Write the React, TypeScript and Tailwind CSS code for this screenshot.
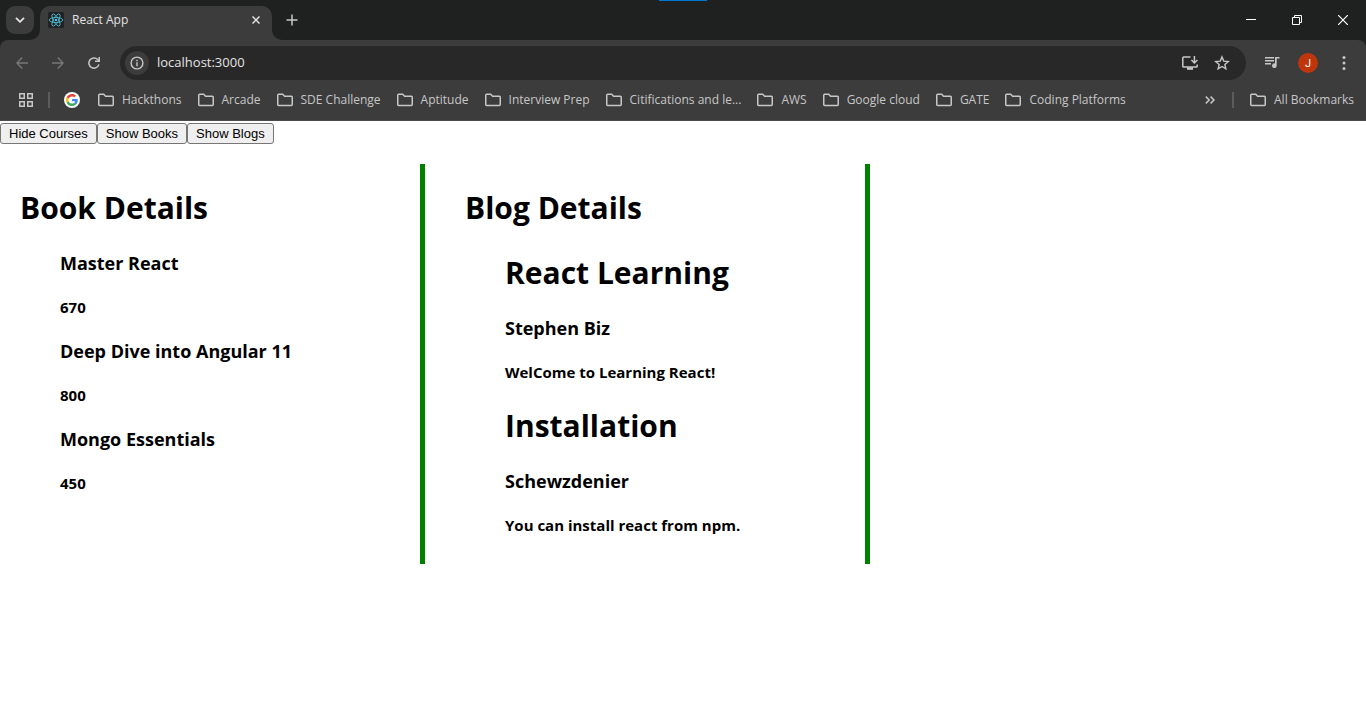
import React from "react";

const bookmarks = [
  "Hackthons",
  "Arcade",
  "SDE Challenge",
  "Aptitude",
  "Interview Prep",
  "Citifications and le...",
  "AWS",
  "Google cloud",
  "GATE",
  "Coding Platforms",
];

const books = [
  { id: 1, name: "Master React", price: 670 },
  { id: 2, name: "Deep Dive into Angular 11", price: 800 },
  { id: 3, name: "Mongo Essentials", price: 450 },
];

const blogs = [
  { id: 1, title: "React Learning", author: "Stephen Biz", text: "WelCome to Learning React!" },
  { id: 2, title: "Installation", author: "Schewzdenier", text: "You can install react from npm." },
];

function FolderIcon() {
  return (
    <svg width="16" height="14" viewBox="0 0 16 14" fill="none" stroke="#c7c7c7" strokeWidth="1.5" className="shrink-0" aria-hidden="true">
      <path d="M.75 11.5V2.2c0-.5.4-.9.9-.9h4.1l1.8 1.9h6.8c.5 0 .9.4.9.9v7.4c0 .5-.4.9-.9.9H1.65c-.5 0-.9-.4-.9-.9z" />
    </svg>
  );
}

function ReactLogo() {
  return (
    <svg width="16" height="16" viewBox="0 0 16 16" className="shrink-0" aria-hidden="true">
      <rect width="16" height="16" rx="1.5" fill="#222222" />
      <g fill="none" stroke="#53c1de" strokeWidth=".8">
        <ellipse cx="8" cy="8" rx="6.8" ry="2.6" />
        <ellipse cx="8" cy="8" rx="6.8" ry="2.6" transform="rotate(60 8 8)" />
        <ellipse cx="8" cy="8" rx="6.8" ry="2.6" transform="rotate(120 8 8)" />
      </g>
      <circle cx="8" cy="8" r="1.3" fill="#53c1de" />
    </svg>
  );
}

function GoogleLogo() {
  return (
    <svg width="16" height="16" viewBox="0 0 16 16" aria-hidden="true">
      <circle cx="8" cy="8" r="8" fill="#fff" />
      <g transform="translate(2 2) scale(.25)">
        <path fill="#EA4335" d="M24 9.5c3.54 0 6.71 1.22 9.21 3.6l6.85-6.85C35.9 2.38 30.47 0 24 0 14.62 0 6.51 5.38 2.56 13.22l7.98 6.19C12.43 13.72 17.74 9.5 24 9.5z" />
        <path fill="#4285F4" d="M46.98 24.55c0-1.57-.15-3.09-.38-4.55H24v9.02h12.94c-.58 2.96-2.26 5.48-4.78 7.18l7.73 6c4.51-4.18 7.09-10.36 7.09-17.65z" />
        <path fill="#FBBC05" d="M10.53 28.59c-.48-1.45-.76-2.99-.76-4.59s.27-3.14.76-4.59l-7.98-6.19C.92 16.46 0 20.12 0 24c0 3.88.92 7.54 2.56 10.78l7.97-6.19z" />
        <path fill="#34A853" d="M24 48c6.48 0 11.93-2.13 15.89-5.81l-7.73-6c-2.15 1.45-4.92 2.3-8.16 2.3-6.26 0-11.57-4.22-13.47-9.91l-7.98 6.19C6.51 42.62 14.62 48 24 48z" />
      </g>
    </svg>
  );
}

function TabStrip() {
  return (
    <div className="relative flex h-10 items-end bg-[#1f2020]">
      <div className="absolute left-[659px] top-0 h-px w-12 bg-[#0078d7]" />
      <button aria-label="Search tabs" className="mb-1.5 ml-1.5 flex size-7 items-center justify-center rounded-[9px] bg-[#3c3c3c]">
        <svg width="10" height="6" viewBox="0 0 10 6" fill="none" stroke="#e3e3e3" strokeWidth="1.8" aria-hidden="true">
          <path d="M1 .8l4 4 4-4" />
        </svg>
      </button>
      <div className="relative ml-1.5 flex h-[34px] w-[232px] items-center rounded-t-[10px] bg-[#3c3c3c] pb-1.5 pl-2 pr-2.5">
        <svg width="10" height="10" viewBox="0 0 10 10" className="absolute -left-2.5 bottom-0" aria-hidden="true">
          <path d="M10 0v10H0A10 10 0 0 0 10 0z" fill="#3c3c3c" />
        </svg>
        <svg width="10" height="10" viewBox="0 0 10 10" className="absolute -right-2.5 bottom-0" aria-hidden="true">
          <path d="M0 0v10h10A10 10 0 0 1 0 0z" fill="#3c3c3c" />
        </svg>
        <ReactLogo />
        <span className="ml-2 flex-1 text-xs text-[#e3e3e3]">React App</span>
        <button aria-label="Close tab" className="flex size-3 items-center justify-center">
          <svg width="8" height="8" viewBox="0 0 8 8" stroke="#e3e3e3" strokeWidth="1.5" aria-hidden="true">
            <path d="M.5.5l7 7M7.5.5l-7 7" />
          </svg>
        </button>
      </div>
      <button aria-label="New tab" className="mb-1.5 ml-1.5 flex size-7 items-center justify-center">
        <svg width="12" height="12" viewBox="0 0 12 12" stroke="#c7c7c7" strokeWidth="1.5" aria-hidden="true">
          <path d="M6 .5v11M.5 6h11" />
        </svg>
      </button>
      <div className="ml-auto flex h-10 items-center">
        <button aria-label="Minimize" className="flex h-10 w-[46px] items-center justify-center">
          <svg width="10" height="10" viewBox="0 0 10 10" aria-hidden="true"><path d="M0 4h10v1H0z" fill="#fff" /></svg>
        </button>
        <button aria-label="Restore" className="flex h-10 w-[46px] items-center justify-center">
          <svg width="10" height="10" viewBox="0 0 10 10" fill="none" stroke="#fff" aria-hidden="true">
            <path d="M.5 2.5h7v7h-7zM2.5 2.5v-2h7v7h-2" />
          </svg>
        </button>
        <button aria-label="Close" className="flex h-10 w-[46px] items-center justify-center">
          <svg width="10" height="10" viewBox="0 0 10 10" stroke="#fff" strokeWidth="1.2" aria-hidden="true">
            <path d="M0 0l10 10M10 0L0 10" />
          </svg>
        </button>
      </div>
    </div>
  );
}

function Toolbar() {
  return (
    <div className="flex h-10 items-end">
      <div className="flex h-[34px] items-center gap-5 pl-3.5">
        <button aria-label="Back" className="flex size-4 items-center justify-center">
          <svg width="12" height="12" viewBox="0 0 12 12" fill="none" stroke="#777777" strokeWidth="1.4" aria-hidden="true">
            <path d="M12 6H1M6.2.6L.9 6l5.3 5.4" />
          </svg>
        </button>
        <button aria-label="Forward" className="flex size-4 items-center justify-center">
          <svg width="12" height="12" viewBox="0 0 12 12" fill="none" stroke="#777777" strokeWidth="1.4" aria-hidden="true">
            <path d="M0 6h11M5.8.6L11.1 6l-5.3 5.4" />
          </svg>
        </button>
        <button aria-label="Reload" className="flex size-4 items-center justify-center">
          <svg width="12" height="12" viewBox="0 0 12 12" aria-hidden="true">
            <path d="M10.9 7.4A5.1 5.1 0 1 1 9.7 2.5L11 3.9" fill="none" stroke="#c7c7c7" strokeWidth="1.5" />
            <path d="M12 0v5H7V3.6h3.5V0z" fill="#c7c7c7" />
          </svg>
        </button>
      </div>
      <div className="ml-[18px] flex h-[34px] flex-1 items-center rounded-full bg-[#282828] pl-[5px] pr-4">
        <button aria-label="View site information" className="flex size-6 items-center justify-center rounded-full bg-[#3c3c3c]">
          <svg width="14" height="14" viewBox="0 0 14 14" aria-hidden="true">
            <circle cx="7" cy="7" r="5.9" fill="none" stroke="#c7c7c7" strokeWidth="1.4" />
            <path d="M6.3 6.2h1.4v4H6.3zM6.3 3.8h1.4v1.4H6.3z" fill="#c7c7c7" />
          </svg>
        </button>
        <input aria-label="Address" defaultValue="localhost:3000" className="ml-2 min-w-0 flex-1 bg-transparent text-[13px] text-[#e3e3e3] outline-none" />
        <button aria-label="Install app" className="flex size-4 items-center justify-center">
          <svg width="16" height="14" viewBox="0 0 16 14" fill="none" stroke="#c7c7c7" strokeWidth="1.5" aria-hidden="true">
            <path d="M8.5.9H1.7c-.5 0-.9.4-.9.9v8.4c0 .5.4.9.9.9h12.6c.5 0 .9-.4.9-.9V8.5" />
            <path d="M12.4 0v6.6M9.4 4l3 3 3-3" />
            <path d="M5 12.6h6" strokeWidth="2.4" />
          </svg>
        </button>
        <button aria-label="Bookmark this tab" className="ml-4 flex size-4 items-center justify-center">
          <svg width="16" height="16" viewBox="0 0 16 16" fill="none" stroke="#c7c7c7" strokeWidth="1.4" aria-hidden="true">
            <path d="M8 1.9l1.75 4.2 4.5.4-3.4 2.95 1 4.4L8 11.5l-3.85 2.35 1-4.4L1.75 6.5l4.5-.4z" />
          </svg>
        </button>
      </div>
      <div className="flex h-[34px] items-center pr-3.5 pl-[18px]">
        <button aria-label="Media controls" className="flex size-4 items-center justify-center">
          <svg width="16" height="14" viewBox="0 0 16 14" aria-hidden="true">
            <path d="M1 1.8h9M1 4.8h9M1 7.8h6" stroke="#c7c7c7" strokeWidth="1.5" />
            <path d="M11 1h4.5v1.6h-2.8v7.1a2.3 2.3 0 1 1-1.7-2.2z" fill="#c7c7c7" />
          </svg>
        </button>
        <button aria-label="Profile" className="ml-[18px] flex size-5 items-center justify-center rounded-full bg-[#bf360c] font-['Roboto',sans-serif] text-[11px] leading-none text-white">
          J
        </button>
        <button aria-label="Menu" className="ml-[18px] flex size-4 items-center justify-center">
          <svg width="4" height="14" viewBox="0 0 4 14" fill="#c7c7c7" aria-hidden="true">
            <circle cx="2" cy="1.6" r="1.5" />
            <circle cx="2" cy="7" r="1.5" />
            <circle cx="2" cy="12.4" r="1.5" />
          </svg>
        </button>
      </div>
    </div>
  );
}

function BookmarkBar() {
  return (
    <nav aria-label="Bookmarks" className="flex h-[41px] items-center whitespace-nowrap border-b border-[#4a4a4a] pl-[19px] pr-3 text-xs text-[#c7c7c7]">
      <button aria-label="Apps">
        <svg width="14" height="14" viewBox="0 0 14 14" fill="none" stroke="#c7c7c7" strokeWidth="1.5" aria-hidden="true">
          <path d="M.75.75h4.5v4.5H.75zM8.75.75h4.5v4.5h-4.5zM.75 8.75h4.5v4.5H.75zM8.75 8.75h4.5v4.5h-4.5z" />
        </svg>
      </button>
      <span className="ml-[15px] h-4 w-0.5 bg-[#5c5c5c]" />
      <a href="#google" aria-label="Google" className="ml-3.5">
        <GoogleLogo />
      </a>
      <div className="ml-[18px] flex items-center gap-4">
        {bookmarks.map((name) => (
          <a key={name} href="#bookmark" className="flex items-center gap-2">
            <FolderIcon />
            <span>{name}</span>
          </a>
        ))}
      </div>
      <button aria-label="More bookmarks" className="ml-auto">
        <svg width="10" height="8" viewBox="0 0 10 8" fill="none" stroke="#c7c7c7" strokeWidth="1.5" aria-hidden="true">
          <path d="M.8.6L4.2 4 .8 7.4M5.6.6L9 4 5.6 7.4" />
        </svg>
      </button>
      <span className="ml-[17px] h-4 w-0.5 bg-[#5c5c5c]" />
      <a href="#all" className="ml-4 flex items-center gap-2">
        <FolderIcon />
        All Bookmarks
      </a>
    </nav>
  );
}

function ToggleButton({ label }: { label: string }) {
  return (
    <button className="h-[21px] rounded-[3px] border border-[#767676] bg-[#efefef] px-2 font-['Liberation_Sans',Arial,sans-serif] text-[13px] leading-none text-black">
      {label}
    </button>
  );
}

export default function App() {
  return (
    <div className="min-h-screen bg-white font-['Open_Sans','Noto_Sans',sans-serif] text-black">
      <header className="bg-[#1f2020]">
        <TabStrip />
        <div className="rounded-t-lg bg-[#3c3c3c]">
          <Toolbar />
          <BookmarkBar />
        </div>
      </header>
      <main>
        <div className="flex pt-0.5">
          <ToggleButton label="Hide Courses" />
          <ToggleButton label="Show Books" />
          <ToggleButton label="Show Blogs" />
        </div>
        <div className="mt-5 flex gap-10 pl-5 font-bold">
          <section className="min-h-[400px] w-[405px] border-r-[5px] border-[#008000] pt-[22px]">
            <h1 className="text-[30px] leading-[44px]">Book Details</h1>
            <ul className="pl-10">
              {books.map((book) => (
                <li key={book.id}>
                  <h3 className="mt-[21px] text-lg leading-[25px]">{book.name}</h3>
                  <h4 className="mt-[21px] text-[15px] leading-[21px]">{book.price}</h4>
                </li>
              ))}
            </ul>
          </section>
          <section className="min-h-[400px] w-[405px] border-r-[5px] border-[#008000] pt-[22px]">
            <h1 className="text-[30px] leading-[44px]">Blog Details</h1>
            <ul className="pl-10">
              {blogs.map((blog) => (
                <li key={blog.id}>
                  <h1 className="mt-[21px] text-[30px] leading-[44px]">{blog.title}</h1>
                  <h3 className="mt-[21px] text-lg leading-[25px]">{blog.author}</h3>
                  <h4 className="mt-[21px] text-[15px] leading-[21px]">{blog.text}</h4>
                </li>
              ))}
            </ul>
          </section>
        </div>
      </main>
    </div>
  );
}
